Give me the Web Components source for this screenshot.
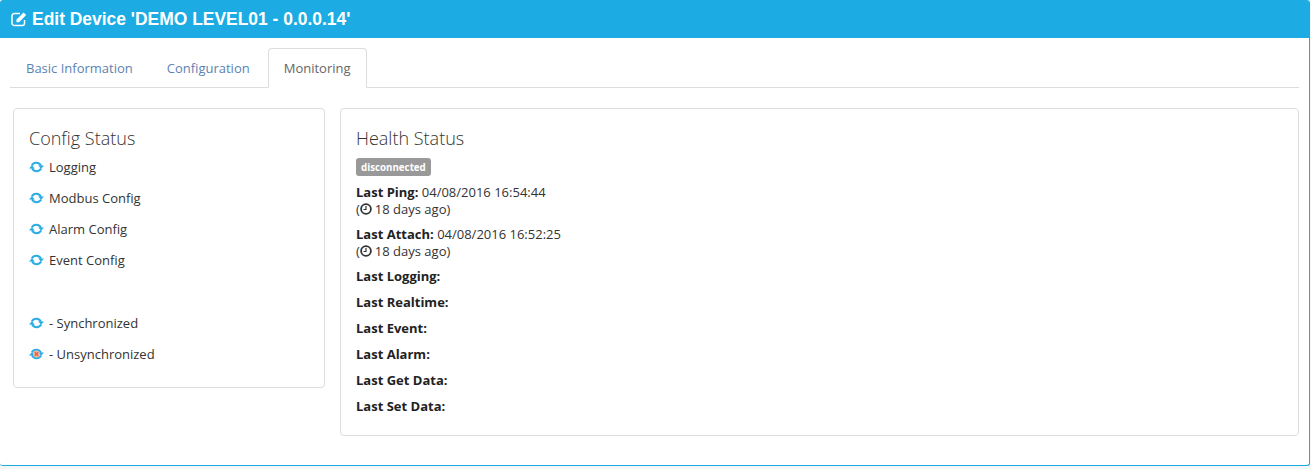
<!DOCTYPE html>
<html>
<head>
<meta charset="utf-8">
<title>Edit Device</title>
<style>
    html, body { margin: 0; padding: 0; height: 100%; }
    body {
        background: #f4f5f5;
        font-family: "Open Sans", sans-serif;
        font-size: 13px;
        color: #333;
    }
</style>
</head>
<body>
<device-modal title-text="Edit Device 'DEMO LEVEL01 - 0.0.0.14'">
    <tab-bar></tab-bar>
    <div slot="left">
        <status-card heading="Config Status" kind="config">
            <sync-row label="Logging"></sync-row>
            <sync-row label="Modbus Config"></sync-row>
            <sync-row label="Alarm Config"></sync-row>
            <sync-row label="Event Config"></sync-row>
            <sync-row label="- Synchronized" legend></sync-row>
            <sync-row label="- Unsynchronized" off></sync-row>
        </status-card>
    </div>
    <div slot="right">
        <status-card heading="Health Status" kind="health">
            <health-badge>disconnected</health-badge>
            <health-row label="Last Ping:" value="04/08/2016 16:54:44" ago="18 days ago"></health-row>
            <health-row label="Last Attach:" value="04/08/2016 16:52:25" ago="18 days ago"></health-row>
            <health-row label="Last Logging:"></health-row>
            <health-row label="Last Realtime:"></health-row>
            <health-row label="Last Event:"></health-row>
            <health-row label="Last Alarm:"></health-row>
            <health-row label="Last Get Data:"></health-row>
            <health-row label="Last Set Data:"></health-row>
        </status-card>
    </div>
</device-modal>

<script>
class DeviceModal extends HTMLElement {
    constructor() {
        super();
        this.attachShadow({ mode: 'open' });
        this.shadowRoot.innerHTML = `
            <style>
                :host {
                    display: block;
                    width: 1310px;
                    height: 466px;
                    box-sizing: border-box;
                    background: #fff;
                    border: 1px solid #1caae2;
                    border-top: 0;
                    border-left: 0;
                    border-radius: 3px;
                    overflow: hidden;
                }
                header {
                    height: 38px;
                    background: #1cace3;
                    color: #fff;
                    display: flex;
                    align-items: center;
                    gap: 4px;
                    padding: 0 0 0 11px;
                    margin-right: -1px;
                    font: bold 17.450px "Liberation Sans", Arial, sans-serif;
                }
                svg { display: block; }
                main { padding: 10px 10px 0 10px; }
                #columns {
                    display: flex;
                    align-items: flex-start;
                    gap: 15px;
                    padding: 20px 0 0 3px;
                }
                #left { width: 312px; flex: none; }
                #right { flex: 1; }
            </style>
            <header>
                <svg width="17" height="16" viewBox="0 0 17 16" fill="none" stroke="#fff">
                    <path d="M13.500 9v3.200a2.300 2.300 0 0 1-2.300 2.300H3.300A2.300 2.300 0 0 1 1 12.200V4.800a2.300 2.300 0 0 1 2.300-2.300H9" stroke-width="1.500"/>
                    <path d="M5.500 8.600 12.600 1.500l2.600 2.600L8.100 11.200H5.500z" fill="#fff" stroke="none"/>
                </svg>
                <span id="title"></span>
            </header>
            <main>
                <slot></slot>
                <div id="columns">
                    <div id="left"><slot name="left"></slot></div>
                    <div id="right"><slot name="right"></slot></div>
                </div>
            </main>
        `;
    }
    connectedCallback() {
        this.shadowRoot.getElementById('title').textContent = this.getAttribute('title-text');
    }
}

class TabBar extends HTMLElement {
    constructor() {
        super();
        this.attachShadow({ mode: 'open' });
        this.shadowRoot.innerHTML = `
            <style>
                :host {
                    display: flex;
                    height: 39px;
                    border-bottom: 1px solid #ddd;
                    font-size: 13px;
                    line-height: 18px;
                }
                a {
                    display: block;
                    box-sizing: border-box;
                    height: 39px;
                    padding: 10px 15px;
                    margin-right: 2px;
                    color: #5b83b3;
                    border: 1px solid transparent;
                    border-radius: 4px 4px 0 0;
                }
                a.active {
                    height: 40px;
                    color: #666;
                    background: #fff;
                    border-color: #ddd #ddd #fff;
                }
            </style>
            <a>Basic Information</a>
            <a>Configuration</a>
            <a class="active">Monitoring</a>
        `;
    }
}

class StatusCard extends HTMLElement {
    constructor() {
        super();
        this.attachShadow({ mode: 'open' });
        this.shadowRoot.innerHTML = `
            <style>
                :host {
                    display: block;
                    box-sizing: border-box;
                    background: #fff;
                    border: 1px solid #ddd;
                    border-radius: 4px;
                }
                :host([kind=config]) { height: 280px; padding: 16px 15px 0 15px; }
                :host([kind=health]) { height: 328px; padding: 16px 15px 0 15px; }
                h3 {
                    margin: 0 0 7px 0;
                    font-family: "Open Sans", sans-serif;
                    font-size: 18px;
                    font-weight: 300;
                    line-height: 26px;
                    color: #333;
                }
            </style>
            <h3 id="h"></h3>
            <slot></slot>
        `;
    }
    connectedCallback() {
        this.shadowRoot.getElementById('h').textContent = this.getAttribute('heading');
    }
}

class SyncRow extends HTMLElement {
    constructor() {
        super();
        this.attachShadow({ mode: 'open' });
        this.shadowRoot.innerHTML = `
            <style>
                :host {
                    display: flex;
                    align-items: center;
                    gap: 5px;
                    height: 18px;
                    margin-bottom: 13px;
                    font-size: 13px;
                    line-height: 18px;
                    color: #333;
                }
                :host([legend]) { margin-top: 45px; }
                svg { display: block; flex: none; }
            </style>
            <svg width="15" height="14" viewBox="0 0 15 14">
                <g fill="none" stroke="#2bade4" stroke-width="2">
                    <path d="M2.800 5.500A5.200 5.200 0 0 1 12 5.800"/>
                    <path d="M12.200 8.500A5.200 5.200 0 0 1 3 8.200"/>
                </g>
                <path d="M9.200 5.500H15L12.100 8.800z" fill="#2bade4"/>
                <path d="M0 8.500H5.800L2.900 5.200z" fill="#2bade4"/>
                <g id="off" style="display:none">
                    <circle cx="7.500" cy="7" r="3.500" fill="#f2b3a4"/>
                    <path d="M5.800 5.300 9.200 8.700M9.200 5.300 5.800 8.700" stroke="#e8604a" stroke-width="1.500"/>
                </g>
            </svg>
            <span id="t"></span>
        `;
    }
    connectedCallback() {
        this.shadowRoot.getElementById('t').textContent = this.getAttribute('label');
        if (this.hasAttribute('off')) this.shadowRoot.getElementById('off').style.display = 'inline';
    }
}

class HealthBadge extends HTMLElement {
    constructor() {
        super();
        this.attachShadow({ mode: 'open' });
        this.shadowRoot.innerHTML = `
            <style>
                :host {
                    display: block;
                    width: max-content;
                    height: 18px;
                    box-sizing: border-box;
                    padding: 0 5px;
                    margin: 1px 0 7px 0;
                    background: #999;
                    border-radius: 3px;
                    color: #fff;
                    font-size: 9.750px;
                    font-weight: 700;
                    line-height: 20px;
                }
            </style>
            <slot></slot>
        `;
    }
}

class HealthRow extends HTMLElement {
    constructor() {
        super();
        this.attachShadow({ mode: 'open' });
        this.shadowRoot.innerHTML = `
            <style>
                :host {
                    display: block;
                    margin-bottom: 8px;
                    font-size: 13px;
                    line-height: 18px;
                    color: #333;
                }
                b { font-weight: 700; color: #222; }
                #ago { display: flex; align-items: center; height: 16px; line-height: 16px; }
                svg { margin: 0 3px 0 0; display: block; }
            </style>
            <div><b id="l"></b> <span id="v"></span></div>
            <div id="ago">(<svg width="12" height="12" viewBox="0 0 12 12" fill="none" stroke="#333">
                <circle cx="6" cy="6" r="4.900" stroke-width="1.800"/>
                <path d="M6 3v3.500H3.500" stroke-width="1.200"/>
            </svg><span id="a"></span>)</div>
        `;
    }
    connectedCallback() {
        const s = this.shadowRoot;
        s.getElementById('l').textContent = this.getAttribute('label');
        s.getElementById('v').textContent = this.getAttribute('value') || '';
        if (this.hasAttribute('ago')) s.getElementById('a').textContent = this.getAttribute('ago');
        else s.getElementById('ago').remove();
    }
}

customElements.define('device-modal', DeviceModal);
customElements.define('tab-bar', TabBar);
customElements.define('status-card', StatusCard);
customElements.define('sync-row', SyncRow);
customElements.define('health-badge', HealthBadge);
customElements.define('health-row', HealthRow);
</script>
</body>
</html>
